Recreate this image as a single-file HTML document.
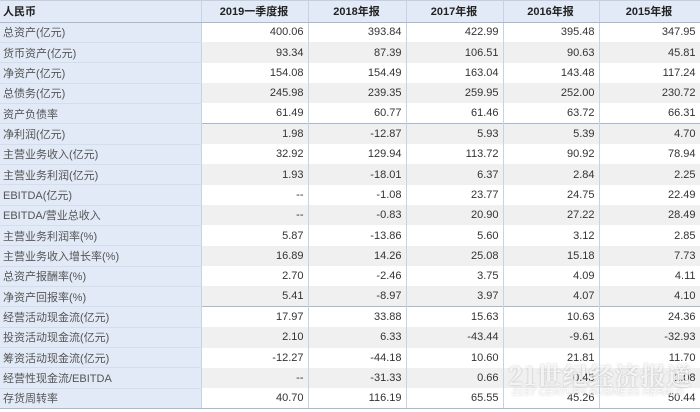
<!DOCTYPE html>
<html><head><meta charset="utf-8"><style>
*{margin:0;padding:0;box-sizing:border-box}
body{width:700px;height:412px;overflow:hidden;background:#fff;font-family:"Liberation Sans","Noto Sans CJK SC",sans-serif;font-size:11px;color:#444;position:relative}
table{border-collapse:collapse;table-layout:fixed;width:700px;position:absolute;top:0;left:0}
td,th{height:20.35px;padding:0 4px 0 3px;white-space:nowrap;overflow:hidden;border-right:1px solid #c5d3e6}
th{height:21.5px;background:#e1eaf6;font-weight:bold;color:#222;border-top:1px solid #c3cfdd;border-bottom:1px solid #a9b8cc;text-align:center;font-size:11px}
th:first-child{text-align:left}
td{text-align:right;color:#333}
td:first-child{text-align:left;background:#e1eaf6;color:#555;border-bottom:1px solid #d3deec}
tr:nth-child(odd) td{background:#f0f0f0}
tr:nth-child(odd) td:first-child{background:#e1eaf6}
tr.sec td{border-top:1px solid #a9b8cc}
tr.last td{border-bottom:1px solid #a9b8cc}
.wm{position:absolute;left:508px;top:357px;color:rgba(255,255,255,.8);font-family:"Noto Serif CJK SC",serif;font-weight:bold;font-size:25px;letter-spacing:1px;text-shadow:0 0 2px rgba(0,0,0,.25)}
.wm2{position:absolute;left:512px;top:387px;color:rgba(255,255,255,.8);font-size:10px;font-style:italic;text-shadow:0 0 2px rgba(0,0,0,.25)}
</style></head><body>
<table>
<colgroup><col style="width:201px"><col style="width:107px"><col style="width:98px"><col style="width:97px"><col style="width:96px"><col style="width:101px"></colgroup>
<tr><th>人民币</th><th>2019一季度报</th><th>2018年报</th><th>2017年报</th><th>2016年报</th><th>2015年报</th></tr>
<tr><td>总资产(亿元)</td><td>400.06</td><td>393.84</td><td>422.99</td><td>395.48</td><td>347.95</td></tr>
<tr><td>货币资产(亿元)</td><td>93.34</td><td>87.39</td><td>106.51</td><td>90.63</td><td>45.81</td></tr>
<tr><td>净资产(亿元)</td><td>154.08</td><td>154.49</td><td>163.04</td><td>143.48</td><td>117.24</td></tr>
<tr><td>总债务(亿元)</td><td>245.98</td><td>239.35</td><td>259.95</td><td>252.00</td><td>230.72</td></tr>
<tr><td>资产负债率</td><td>61.49</td><td>60.77</td><td>61.46</td><td>63.72</td><td>66.31</td></tr>
<tr class="sec"><td>净利润(亿元)</td><td>1.98</td><td>-12.87</td><td>5.93</td><td>5.39</td><td>4.70</td></tr>
<tr><td>主营业务收入(亿元)</td><td>32.92</td><td>129.94</td><td>113.72</td><td>90.92</td><td>78.94</td></tr>
<tr><td>主营业务利润(亿元)</td><td>1.93</td><td>-18.01</td><td>6.37</td><td>2.84</td><td>2.25</td></tr>
<tr><td>EBITDA(亿元)</td><td>--</td><td>-1.08</td><td>23.77</td><td>24.75</td><td>22.49</td></tr>
<tr><td>EBITDA/营业总收入</td><td>--</td><td>-0.83</td><td>20.90</td><td>27.22</td><td>28.49</td></tr>
<tr><td>主营业务利润率(%)</td><td>5.87</td><td>-13.86</td><td>5.60</td><td>3.12</td><td>2.85</td></tr>
<tr><td>主营业务收入增长率(%)</td><td>16.89</td><td>14.26</td><td>25.08</td><td>15.18</td><td>7.73</td></tr>
<tr><td>总资产报酬率(%)</td><td>2.70</td><td>-2.46</td><td>3.75</td><td>4.09</td><td>4.11</td></tr>
<tr><td>净资产回报率(%)</td><td>5.41</td><td>-8.97</td><td>3.97</td><td>4.07</td><td>4.10</td></tr>
<tr class="sec"><td>经营活动现金流(亿元)</td><td>17.97</td><td>33.88</td><td>15.63</td><td>10.63</td><td>24.36</td></tr>
<tr><td>投资活动现金流(亿元)</td><td>2.10</td><td>6.33</td><td>-43.44</td><td>-9.61</td><td>-32.93</td></tr>
<tr><td>筹资活动现金流(亿元)</td><td>-12.27</td><td>-44.18</td><td>10.60</td><td>21.81</td><td>11.70</td></tr>
<tr><td>经营性现金流/EBITDA</td><td>--</td><td>-31.33</td><td>0.66</td><td>0.43</td><td>1.08</td></tr>
<tr class="last"><td>存货周转率</td><td>40.70</td><td>116.19</td><td>65.55</td><td>45.26</td><td>50.44</td></tr>
</table>
<div class="wm">21世纪经济报道</div>
<div class="wm2">21ST CENTURY BUSINESS HERALD</div>
</body></html>
